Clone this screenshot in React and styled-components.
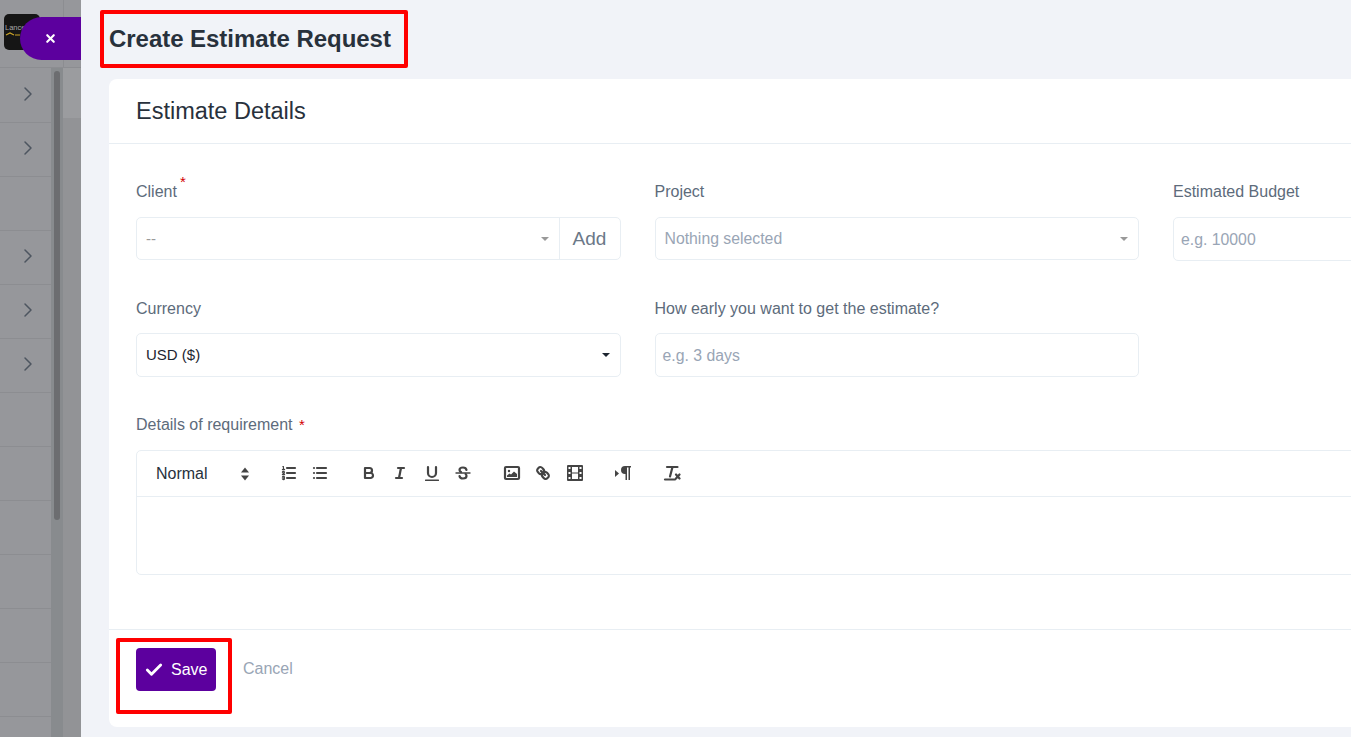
import styled, { createGlobalStyle } from "styled-components";
import { ChevronRight, X, Check } from "lucide-react";

const GlobalStyle = createGlobalStyle`
  html, body {
    margin: 0;
    padding: 0;
    height: 100%;
    overflow: hidden;
    background: #f1f3f8;
    font-family: "Liberation Sans", Arial, sans-serif;
  }
  * { box-sizing: border-box; }
`;

const Page = styled.div`
  display: flex;
  width: 1351px;
  height: 737px;
  overflow: hidden;
  position: relative;
`;

// dimmed app behind the drawer
const Backdrop = styled.div`
  width: 81px;
  flex-shrink: 0;
  display: flex;
  background: #96979b;
`;

const SideNav = styled.div`
  width: 51px;
  flex-shrink: 0;
`;

const BrandRow = styled.div`
  height: 68px;
  margin-bottom: 1px;
  padding: 14px 0 0 4px;
  border-bottom: 1px solid #8c8d91;
`;

const Logo = styled.div`
  width: 36px;
  height: 36px;
  border-radius: 5px;
  background: #151515;
  color: #a8a8a8;
  font-size: 7.5px;
  line-height: 8px;
  padding: 10px 0 0 1px;
  overflow: hidden;
`;

const LogoMark = styled.svg`
  display: block;
  width: 16px;
  height: 4px;
`;

const NavRow = styled.div`
  height: 54px;
  display: flex;
  align-items: center;
  padding: 0 0 4px 16px;
  border-bottom: 1px solid #8c8d91;
  color: #4d5560;
`;

const Rail = styled.div`
  width: 12px;
  flex-shrink: 0;
  display: flex;
  flex-direction: column;
`;

const RailHead = styled.div`
  height: 68px;
  border-bottom: 1px solid #8c8d91;
`;

const RailTrack = styled.div`
  flex: 1;
  padding: 3px 3px 0;
  background: #888b8e;
`;

const RailThumb = styled.div`
  width: 6px;
  height: 449px;
  border-radius: 3px;
  background: #6c6d70;
`;

const Strip = styled.div`
  flex: 1;
  background: #929396;
`;

const StripTop = styled.div`
  height: 68px;
  background: #96979b;
  border-left: 1px solid #8c8d91;
  border-bottom: 1px solid #8c8d91;
`;

const StripBand = styled.div`
  height: 50px;
  background: #9b9c9f;
`;

const CloseTab = styled.div`
  position: absolute;
  left: 20px;
  top: 17px;
  width: 61px;
  height: 43px;
  border-radius: 22px 0 0 22px;
  background: #5c009e;
  color: #fff;
  display: flex;
  align-items: center;
  padding-left: 24px;
`;

const Main = styled.main`
  flex: 1;
  min-width: 0;
  padding: 10px 0 0 19px;
  background: #f1f3f8;
`;

const Title = styled.h1`
  display: block;
  width: 308px;
  height: 58px;
  margin: 0 0 11px;
  padding: 0 0 0 5px;
  border: 4px solid #ff0000;
  border-radius: 2px;
  font-size: 24px;
  font-weight: 700;
  letter-spacing: -0.04px;
  line-height: 50px;
  color: #28313c;
  white-space: nowrap;
`;

const Card = styled.section`
  margin-left: 9px;
  width: 1560px;
  height: 648px;
  background: #fff;
  border-radius: 8px;
  display: flex;
  flex-direction: column;
`;

const CardHead = styled.div`
  height: 65px;
  padding: 0 27px;
  display: flex;
  align-items: center;
  border-bottom: 1px solid #e8eef3;
  font-size: 23.5px;
  color: #28313c;
`;

const CardBody = styled.div`
  flex: 1;
  padding: 36px 27px 0;
`;

const FormGrid = styled.div`
  display: grid;
  grid-template-columns: repeat(3, 484.5px);
  column-gap: 34px;
`;

const Field = styled.div`
  height: ${(p) => p.$h}px;
`;

const Label = styled.label`
  display: block;
  height: ${(p) => (p.$tight ? 36 : 37)}px;
  line-height: 24px;
  font-size: 16px;
  color: #5d6b7b;
  white-space: nowrap;
`;

const Star = styled.sup`
  color: #d30000;
  font-size: 15px;
  line-height: 0;
  margin-left: ${(p) => p.$gap}px;
  vertical-align: ${(p) => (p.$raised ? "10px" : "0")};
`;

const Control = styled.div`
  height: ${(p) => p.$h}px;
  display: flex;
  align-items: center;
  justify-content: space-between;
  padding: ${(p) => (p.$arrow ? "0 10px 0 9px" : "2px 7px 0")};
  border: 1px solid #e8eef3;
  border-radius: 5px;
  font-size: ${(p) => (p.$filled ? 15 : 15.8)}px;
  color: ${(p) => (p.$filled ? "#1d2530" : "#99a5b5")};
`;

const ControlText = styled.span`
  margin-top: ${(p) => (p.$lift ? -2 : 0)}px;
`;

const InputGroup = styled.div`
  height: 43px;
  display: flex;
  border: 1px solid #e8eef3;
  border-radius: 5px;
  font-size: 15px;
`;

const GroupSelect = styled.div`
  flex: 1;
  display: flex;
  align-items: center;
  justify-content: space-between;
  padding: 0 10px 0 9px;
  color: #9a9a9a;
`;

const AddonBtn = styled.div`
  width: 61px;
  display: flex;
  align-items: center;
  justify-content: center;
  border-left: 1px solid #e8eef3;
  font-size: 19px;
  color: #6b7888;
`;

const Caret = styled.span`
  width: 0;
  height: 0;
  border-left: 4px solid transparent;
  border-right: 4px solid transparent;
  border-top: 4px solid ${(p) => (p.$dark ? "#1d2530" : "#999999")};
`;

const Editor = styled.div`
  height: 125px;
  border: 1px solid #e8eef3;
  border-radius: 5px;
`;

const Toolbar = styled.div`
  height: 46px;
  display: flex;
  align-items: center;
  gap: 17px;
  padding-left: 8px;
  border-bottom: 1px solid #e8eef3;
`;

const Picker = styled.div`
  width: 111px;
  padding: 0 2px 0 11px;
  display: flex;
  align-items: center;
  justify-content: space-between;
  font-size: 16px;
  color: #28313c;
`;

const ToolGroup = styled.div`
  display: flex;
`;

const ToolBtn = styled.span`
  width: 31.5px;
  height: 24px;
  margin-top: -2px;
  display: flex;
  align-items: center;
  justify-content: center;
`;

const Footer = styled.div`
  height: 98px;
  padding: 8px 0 0 7px;
  border-top: 1px solid #e8eef3;
  display: flex;
  align-items: flex-start;
`;

const SaveFrame = styled.div`
  width: 116px;
  height: 76px;
  padding: 6px 0 0 16px;
  border: 4px solid #ff0000;
  border-radius: 2px;
`;

const SaveButton = styled.button`
  width: 80px;
  height: 43px;
  padding: 0 0 0 8px;
  display: flex;
  align-items: center;
  gap: 7px;
  border: none;
  border-radius: 4px;
  background: #5c009e;
  color: #fff;
  font-family: inherit;
  font-size: 16px;
`;

const CancelLink = styled.a`
  margin: 19px 0 0 11px;
  font-size: 16px;
  line-height: 24px;
  color: #99a5b5;
`;

const Stroke = styled.svg`
  width: 18px;
  height: 18px;
  fill: none;
  stroke: #444;
  stroke-width: 2.2;
  stroke-linecap: round;
  stroke-linejoin: round;
  & .fill {
    fill: #444;
    stroke: none;
  }
  & .hole {
    fill: #fff;
    stroke: none;
  }
  & .thin {
    stroke-width: 1.4;
  }
`;

const Icon = ({ children }) => <Stroke viewBox="0 0 18 18">{children}</Stroke>;

const PickerArrows = () => (
  <Stroke viewBox="0 0 18 18">
    <polygon className="fill" points="5 7.5 9 2.5 13 7.5" />
    <polygon className="fill" points="5 10.5 13 10.5 9 15.5" />
  </Stroke>
);

const navRows = [true, true, false, true, true, true, false, false, false, false, false, false];

export default function App() {
  return (
    <Page>
      <GlobalStyle />
      <Backdrop>
        <SideNav>
          <BrandRow>
            <Logo>
              Lance
              <LogoMark viewBox="0 0 16 4">
                <path d="M1 3 L5 1 L9 3 M10 3 H15" stroke="#c9a227" strokeWidth="1.2" fill="none" />
              </LogoMark>
            </Logo>
          </BrandRow>
          {navRows.map((hasArrow, i) => (
            <NavRow key={i}>{hasArrow && <ChevronRight size={24} strokeWidth={1.5} />}</NavRow>
          ))}
        </SideNav>
        <Rail>
          <RailHead />
          <RailTrack>
            <RailThumb />
          </RailTrack>
        </Rail>
        <Strip>
          <StripTop />
          <StripBand />
        </Strip>
      </Backdrop>
      <CloseTab>
        <X size={13} strokeWidth={4} />
      </CloseTab>

      <Main>
        <Title>Create Estimate Request</Title>
        <Card>
          <CardHead>Estimate Details</CardHead>
          <CardBody>
            <FormGrid>
              <Field $h="117">
                <Label>
                  Client<Star $gap="3" $raised>*</Star>
                </Label>
                <InputGroup>
                  <GroupSelect>
                    --
                    <Caret />
                  </GroupSelect>
                  <AddonBtn>Add</AddonBtn>
                </InputGroup>
              </Field>
              <Field $h="117">
                <Label>Project</Label>
                <Control $h="43" $arrow>
                  Nothing selected
                  <Caret />
                </Control>
              </Field>
              <Field $h="117">
                <Label>Estimated Budget</Label>
                <Control $h="44">e.g. 10000</Control>
              </Field>
              <Field $h="116">
                <Label $tight>Currency</Label>
                <Control $h="44" $arrow $filled>
                  <ControlText $lift>USD ($)</ControlText>
                  <Caret $dark />
                </Control>
              </Field>
              <Field $h="116">
                <Label $tight>How early you want to get the estimate?</Label>
                <Control $h="44">e.g. 3 days</Control>
              </Field>
            </FormGrid>
            <Label>
              Details of requirement <Star $gap="2">*</Star>
            </Label>
            <Editor>
              <Toolbar>
                <Picker>
                  Normal
                  <PickerArrows />
                </Picker>
                <ToolGroup>
                  <ToolBtn>
                    <Icon>
                      <line x1="7" x2="15" y1="4" y2="4" />
                      <line x1="7" x2="15" y1="9" y2="9" />
                      <line x1="7" x2="15" y1="14" y2="14" />
                      <line className="thin" x1="2.5" x2="4.5" y1="5.5" y2="5.5" />
                      <path className="fill" d="M3.5,6A0.5,0.5,0,0,1,3,5.5V3.085l-0.276.138A0.5,0.5,0,0,1,2.053,3c-0.124-.247-0.023-0.324.224-0.447l1-.5A0.5,0.5,0,0,1,4,2.5v3A0.5,0.5,0,0,1,3.5,6Z" />
                      <path className="thin" d="M4.5,10.5h-2c0-.234,1.85-1.076,1.85-2.234A0.959,0.959,0,0,0,2.5,8.156" />
                      <path className="thin" d="M2.5,14.846a0.959,0.959,0,0,0,1.85-.109A0.7,0.7,0,0,0,3.75,14a0.688,0.688,0,0,0,.6-0.736,0.959,0.959,0,0,0-1.85-.109" />
                    </Icon>
                  </ToolBtn>
                  <ToolBtn>
                    <Icon>
                      <line x1="6" x2="15" y1="4" y2="4" />
                      <line x1="6" x2="15" y1="9" y2="9" />
                      <line x1="6" x2="15" y1="14" y2="14" />
                      <line x1="3" x2="3" y1="4" y2="4" />
                      <line x1="3" x2="3" y1="9" y2="9" />
                      <line x1="3" x2="3" y1="14" y2="14" />
                    </Icon>
                  </ToolBtn>
                </ToolGroup>
                <ToolGroup>
                  <ToolBtn>
                    <Icon>
                      <path d="M5,4H9.5A2.5,2.5,0,0,1,12,6.5v0A2.5,2.5,0,0,1,9.5,9H5A0,0,0,0,1,5,9V4A0,0,0,0,1,5,4Z" />
                      <path d="M5,9h5.5A2.5,2.5,0,0,1,13,11.5v0A2.5,2.5,0,0,1,10.5,14H5a0,0,0,0,1,0,0V9A0,0,0,0,1,5,9Z" />
                    </Icon>
                  </ToolBtn>
                  <ToolBtn>
                    <Icon>
                      <line x1="7" x2="13" y1="4" y2="4" />
                      <line x1="5" x2="11" y1="14" y2="14" />
                      <line x1="8" x2="10" y1="14" y2="4" />
                    </Icon>
                  </ToolBtn>
                  <ToolBtn>
                    <Icon>
                      <path d="M5,3V9a4.012,4.012,0,0,0,4,4H9a4.012,4.012,0,0,0,4-4V3" />
                      <rect className="fill" height="1.5" rx="0.5" ry="0.5" width="14" x="2" y="15.5" />
                    </Icon>
                  </ToolBtn>
                  <ToolBtn>
                    <Icon>
                      <line className="thin" x1="2" x2="16" y1="9" y2="9" />
                      <path d="M12.5,6C12.2,4.3,10.6,3.5,9,3.5C7.2,3.5,5.5,4.4,5.5,6C5.5,7,6.2,7.7,7,8" />
                      <path d="M5.5,12C5.8,13.7,7.4,14.5,9,14.5C10.8,14.5,12.5,13.6,12.5,12C12.5,11.2,12.2,10.6,11.6,10" />
                    </Icon>
                  </ToolBtn>
                </ToolGroup>
                <ToolGroup>
                  <ToolBtn>
                    <Icon>
                      <rect height="12" width="14" x="2" y="3" rx="1" />
                      <circle className="fill" cx="6" cy="7" r="1.2" />
                      <polyline className="fill" points="4 13 4 11.5 6.5 9.5 8 10.5 11 7.5 14 10 14 13 4 13" />
                    </Icon>
                  </ToolBtn>
                  <ToolBtn>
                    <Icon>
                      <line x1="7" x2="11" y1="7" y2="11" />
                      <path d="M8.9,4.577a3.476,3.476,0,0,1,.36,4.679A3.476,3.476,0,0,1,4.577,8.9C3.185,7.5,2.035,6.4,4.217,4.217S7.5,3.185,8.9,4.577Z" />
                      <path d="M13.423,9.1a3.476,3.476,0,0,0-4.679-.36,3.476,3.476,0,0,0,.36,4.679c1.392,1.392,2.5,2.542,4.679.36S14.815,10.5,13.423,9.1Z" />
                    </Icon>
                  </ToolBtn>
                  <ToolBtn>
                    <Icon>
                      <rect className="fill" height="16" width="16" x="1" y="1" rx="1" />
                      <rect className="hole" height="5.5" width="6" x="6" y="3" />
                      <rect className="hole" height="5.5" width="6" x="6" y="9.5" />
                      <rect className="hole" height="2" width="2" x="2.5" y="3" />
                      <rect className="hole" height="2" width="2" x="2.5" y="8" />
                      <rect className="hole" height="2" width="2" x="2.5" y="13" />
                      <rect className="hole" height="2" width="2" x="13.5" y="3" />
                      <rect className="hole" height="2" width="2" x="13.5" y="8" />
                      <rect className="hole" height="2" width="2" x="13.5" y="13" />
                    </Icon>
                  </ToolBtn>
                </ToolGroup>
                <ToolGroup>
                  <ToolBtn>
                    <Icon>
                      <polygon className="fill" points="1 6 5 9.5 1 13" />
                      <path className="fill" d="M11,2H17V3.5H16V16H14.5V3.5H13V16H11.5V10H11A4,4,0,0,1,11,2Z" />
                    </Icon>
                  </ToolBtn>
                </ToolGroup>
                <ToolGroup>
                  <ToolBtn>
                    <Icon>
                      <line x1="4" x2="14.5" y1="3" y2="3" />
                      <line x1="2" x2="12" y1="15.5" y2="15.5" />
                      <line x1="9.5" x2="7" y1="3" y2="12.5" />
                      <line x1="13" x2="16.5" y1="10.5" y2="14.5" />
                      <line x1="16.5" x2="13" y1="10.5" y2="14.5" />
                    </Icon>
                  </ToolBtn>
                </ToolGroup>
              </Toolbar>
            </Editor>
          </CardBody>
          <Footer>
            <SaveFrame>
              <SaveButton>
                <Check size={20} strokeWidth={3.4} />
                Save
              </SaveButton>
            </SaveFrame>
            <CancelLink>Cancel</CancelLink>
          </Footer>
        </Card>
      </Main>
    </Page>
  );
}
